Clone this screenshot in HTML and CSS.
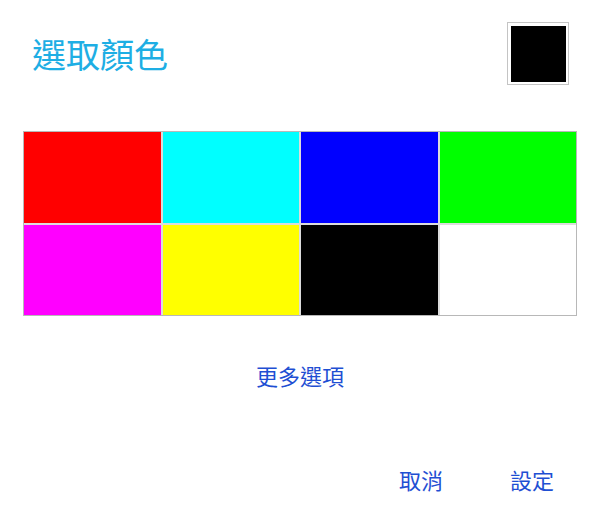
FILE: index.html
```html
<!DOCTYPE html>
<html lang="zh-Hant">
<head>
<meta charset="utf-8">
<title>選取顏色</title>
<link rel="stylesheet" href="styles.css">
</head>
<body>
<div class="dialog">
  <div class="header">
    <h1 class="title">選取顏色</h1>
    <div class="current"><div class="current-fill"></div></div>
  </div>
  <div class="palette">
    <div class="cell red"></div>
    <div class="cell cyan"></div>
    <div class="cell blue"></div>
    <div class="cell green"></div>
    <div class="cell magenta"></div>
    <div class="cell yellow"></div>
    <div class="cell black"></div>
    <div class="cell white"></div>
  </div>
  <div class="more"><span class="link">更多選項</span></div>
  <div class="actions">
    <span class="btn">取消</span>
    <span class="btn">設定</span>
  </div>
</div>
</body>
</html>
```

FILE: styles.css
```css
html, body {
  margin: 0;
  padding: 0;
  background: #ffffff;
}
body {
  font-family: "Noto Sans CJK TC", "Noto Sans", sans-serif;
}
.dialog {
  width: 600px;
  height: 524px;
  display: flex;
  flex-direction: column;
}
.header {
  display: flex;
  justify-content: space-between;
  align-items: center;
  padding: 22px 31px 0 32px;
}
.title {
  margin: 0;
  font-size: 34px;
  font-weight: 400;
  line-height: 40px;
  color: #1eaee4;
}
.current {
  width: 55px;
  height: 56px;
  border: 1px solid #c4c4c4;
  padding: 3px 2px 2px 3px;
}
.current-fill {
  width: 100%;
  height: 100%;
  background: #000000;
}
.palette {
  margin: 46px 23px 0 23px;
  display: grid;
  grid-template-columns: repeat(4, 1fr);
  grid-template-rows: 91px 90px;
  gap: 2px;
  background: #dcdcdc;
  border: 1px solid #b8b8b8;
}
.cell { min-width: 0; }
.red { background: #ff0000; }
.cyan { background: #00ffff; }
.blue { background: #0000ff; }
.green { background: #00ff00; }
.magenta { background: #ff00ff; }
.yellow { background: #ffff00; }
.black { background: #000000; }
.white { background: #ffffff; }
.more {
  margin-top: 44px;
  text-align: center;
  font-size: 22px;
  line-height: 30px;
}
.link, .btn {
  color: #1f4fd3;
}
.actions {
  margin-top: 74px;
  display: flex;
  justify-content: flex-end;
  gap: 67px;
  padding-right: 46px;
  font-size: 22px;
  line-height: 30px;
}
```
